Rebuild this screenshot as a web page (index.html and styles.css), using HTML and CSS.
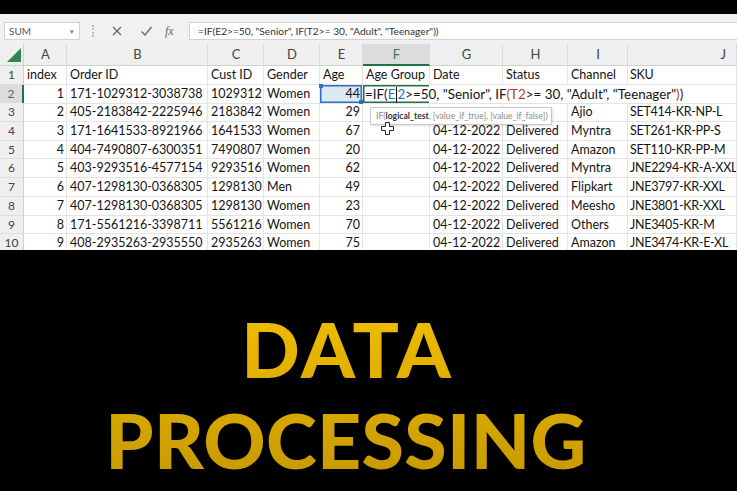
FILE: index.html
```html
<!DOCTYPE html>
<html>
<head>
<meta charset="utf-8">
<link rel="stylesheet" href="styles.css">
</head>
<body>
<div class="band"></div>
<div class="app">
  <div class="fbar">
    <div class="namebox"><span>SUM</span><span class="caret-down">▾</span></div>
    <div class="dots"></div>
    <div class="icons">
      <svg class="ico" width="12" height="12" viewBox="0 0 12 12"><path d="M2 2 L10 10 M10 2 L2 10" stroke="#666" stroke-width="1.3" fill="none"/></svg>
      <svg class="ico ok" width="13" height="12" viewBox="0 0 13 12"><path d="M1.5 6.5 L5 10 L11.5 2" stroke="#666" stroke-width="1.3" fill="none"/></svg>
      <span class="fx">fx</span>
    </div>
    <div class="finput">=IF(E2&gt;=50, "Senior", IF(T2&gt;= 30, "Adult", "Teenager"))</div>
  </div>
  <div class="sheet">
    <div class="row head">
      <div class="c rh corner"><svg width="14" height="14" viewBox="0 0 14 14"><path d="M14 0 L14 14 L0 14 Z" fill="#2d8a4e"/></svg></div>
      <div class="c ch">A</div><div class="c ch">B</div><div class="c ch">C</div><div class="c ch">D</div><div class="c ch">E</div><div class="c ch selcol">F</div><div class="c ch">G</div><div class="c ch">H</div><div class="c ch">I</div><div class="c ch jh">J</div>
    </div>
    <div class="row">
      <div class="c rh">1</div><div class="c">index</div><div class="c">Order ID</div><div class="c">Cust ID</div><div class="c">Gender</div><div class="c">Age</div><div class="c">Age Group</div><div class="c">Date</div><div class="c">Status</div><div class="c">Channel</div><div class="c sku">SKU</div>
    </div>
    <div class="row">
      <div class="c rh selrow">2</div><div class="c r">1</div><div class="c">171-1029312-3038738</div><div class="c r">1029312</div><div class="c">Women</div><div class="c r ref">44</div>
      <div class="c active nb">=IF(<span class="blue">E</span><span class="tcaret"></span><span class="blue">2</span>&gt;=50, "Senior", IF<span class="red">(T2</span>&gt;= 30, "Adult", "Teenager"<span class="red">)</span>)</div>
      <div class="c nb"></div><div class="c nb"></div><div class="c nb"></div><div class="c"></div>
    </div>
    <div class="row">
      <div class="c rh">3</div><div class="c r">2</div><div class="c">405-2183842-2225946</div><div class="c r">2183842</div><div class="c">Women</div><div class="c r">29</div><div class="c"></div><div class="c"></div><div class="c"></div><div class="c">Ajio</div><div class="c sku">SET414-KR-NP-L</div>
    </div>
    <div class="row">
      <div class="c rh">4</div><div class="c r">3</div><div class="c">171-1641533-8921966</div><div class="c r">1641533</div><div class="c">Women</div><div class="c r">67</div><div class="c"></div><div class="c r">04-12-2022</div><div class="c">Delivered</div><div class="c">Myntra</div><div class="c sku">SET261-KR-PP-S</div>
    </div>
    <div class="row">
      <div class="c rh">5</div><div class="c r">4</div><div class="c">404-7490807-6300351</div><div class="c r">7490807</div><div class="c">Women</div><div class="c r">20</div><div class="c"></div><div class="c r">04-12-2022</div><div class="c">Delivered</div><div class="c">Amazon</div><div class="c sku">SET110-KR-PP-M</div>
    </div>
    <div class="row">
      <div class="c rh">6</div><div class="c r">5</div><div class="c">403-9293516-4577154</div><div class="c r">9293516</div><div class="c">Women</div><div class="c r">62</div><div class="c"></div><div class="c r">04-12-2022</div><div class="c">Delivered</div><div class="c">Myntra</div><div class="c sku">JNE2294-KR-A-XXL</div>
    </div>
    <div class="row">
      <div class="c rh">7</div><div class="c r">6</div><div class="c">407-1298130-0368305</div><div class="c r">1298130</div><div class="c">Men</div><div class="c r">49</div><div class="c"></div><div class="c r">04-12-2022</div><div class="c">Delivered</div><div class="c">Flipkart</div><div class="c sku">JNE3797-KR-XXL</div>
    </div>
    <div class="row">
      <div class="c rh">8</div><div class="c r">7</div><div class="c">407-1298130-0368305</div><div class="c r">1298130</div><div class="c">Women</div><div class="c r">23</div><div class="c"></div><div class="c r">04-12-2022</div><div class="c">Delivered</div><div class="c">Meesho</div><div class="c sku">JNE3801-KR-XXL</div>
    </div>
    <div class="row">
      <div class="c rh">9</div><div class="c r">8</div><div class="c">171-5561216-3398711</div><div class="c r">5561216</div><div class="c">Women</div><div class="c r">70</div><div class="c"></div><div class="c r">04-12-2022</div><div class="c">Delivered</div><div class="c">Others</div><div class="c sku">JNE3405-KR-M</div>
    </div>
    <div class="row">
      <div class="c rh">10</div><div class="c r">9</div><div class="c">408-2935263-2935550</div><div class="c r">2935263</div><div class="c">Women</div><div class="c r">75</div><div class="c"></div><div class="c r">04-12-2022</div><div class="c">Delivered</div><div class="c">Amazon</div><div class="c sku">JNE3474-KR-E-XL</div>
    </div>
    <div class="tip">IF(<b>logical_test</b>, [value_if_true], [value_if_false])</div>
    <svg class="cursor" width="13" height="13" viewBox="0 0 13 13"><path d="M4.5 0.5 H8.5 V4.5 H12.5 V8.5 H8.5 V12.5 H4.5 V8.5 H0.5 V4.5 H4.5 Z" fill="#fff" stroke="#222" stroke-width="1"/></svg>
  </div>
</div>
<div class="title"><span class="l1">DATA</span><br><span class="l2">PROCESSING</span></div>
</body>
</html>
```

FILE: styles.css
```css
html, body {
  margin: 0;
  padding: 0;
}
body {
  width: 737px;
  height: 491px;
  overflow: hidden;
  background: #000;
  font-family: Lato, "Open Sans", sans-serif;
}
.band {
  height: 14px;
  background: #000;
}
.app {
  height: 236px;
  background: #fff;
  overflow: hidden;
}
.fbar {
  height: 30px;
  box-sizing: border-box;
  background: #f1f1f1;
  display: flex;
  align-items: stretch;
  padding: 8px 0 4px 4px;
}
.namebox {
  width: 76px;
  box-sizing: border-box;
  background: #fff;
  border: 1px solid #d2d2d2;
  display: flex;
  align-items: center;
  justify-content: space-between;
  padding: 0 5px 0 4px;
  font-size: 10px;
  color: #555;
}
.caret-down {
  font-size: 7px;
  color: #777;
}
.dots {
  width: 1px;
  margin: 3px 11px 3px 12px;
  border-left: 2px dotted #b8b8b8;
}
.icons {
  display: flex;
  align-items: center;
  width: 83px;
  padding-left: 5px;
  box-sizing: border-box;
  flex: none;
}
.ico {
  margin-right: 17px;
}
.ico.ok {
  margin-right: 12px;
}
.fx {
  font-family: "Liberation Serif", serif;
  font-style: italic;
  font-size: 12px;
  color: #666;
}
.finput {
  flex: 1;
  background: #fff;
  border: 1px solid #d2d2d2;
  border-right: none;
  box-sizing: border-box;
  padding-left: 8px;
  font-size: 10.2px;
  line-height: 16px;
  color: #333;
  white-space: nowrap;
}
.sheet {
  position: relative;
}
.row {
  display: grid;
  grid-template-columns: 24px 43px 141px 56px 56px 43px 67px 73px 65px 60px 109px;
  height: 18.7px;
}
.row.head {
  height: 22px;
  background: #efefef;
}
.c {
  box-sizing: border-box;
  border-right: 1px solid #e4e4e4;
  border-bottom: 1px solid #e4e4e4;
  padding: 0 2px 0 3px;
  white-space: nowrap;
  overflow: hidden;
  font-size: 12.5px;
  line-height: 18px;
  color: #141414;
}
.sku {
  letter-spacing: -0.3px;
  padding-left: 2px;
}
.r {
  text-align: right;
}
.rh {
  background: #efefef;
  color: #444;
  text-align: center;
  font-size: 12px;
  border-right: 1px solid #d0d0d0;
  border-bottom: 1px solid #dcdcdc;
  padding: 0;
}
.head .c {
  line-height: 21px;
  border-bottom: 1px solid #d0d0d0;
}
.ch {
  background: #efefef;
  color: #444;
  text-align: center;
  font-size: 13px;
  border-right: 1px solid #dadada;
}
.jh {
  text-align: right;
  padding-right: 10px;
}
.corner {
  display: flex;
  align-items: flex-end;
  justify-content: flex-end;
  padding: 0 2px 3px 0;
}
.corner svg {
  display: block;
}
.selcol {
  background: #dcdcdc;
  color: #3b7a52;
  border-bottom: 2px solid #217346 !important;
}
.selrow {
  background: #dcdcdc;
  color: #3b7a52;
  border-right: 2px solid #217346;
}
.ref {
  background: #dde8f5;
  box-shadow: inset 0 0 0 1.5px #2f6fbf;
  position: relative;
  overflow: visible;
}
.ref::before, .ref::after {
  content: "";
  position: absolute;
  width: 4px;
  height: 4px;
  background: #2f6fbf;
}
.ref::before {
  left: -1px;
  top: -1px;
}
.ref::after {
  right: -1px;
  bottom: -1px;
}
.active {
  overflow: visible;
  box-shadow: inset 1.5px 1.5px 0 0 #217346, inset 0 -1.5px 0 0 #217346;
  padding-left: 2px;
  font-size: 13.4px;
}
.nb {
  border-right-color: transparent;
}
.blue {
  color: #2f6fbf;
}
.red {
  color: #c0392b;
}
.tcaret {
  display: inline-block;
  width: 1px;
  height: 16px;
  background: #111;
  vertical-align: middle;
  margin: 0 0.5px;
}
.tip {
  position: absolute;
  left: 370px;
  top: 63px;
  width: 182px;
  height: 18px;
  box-sizing: border-box;
  background: #fff;
  border: 1px solid #c8c8c8;
  font-size: 8.6px;
  line-height: 16px;
  color: #8a8a8a;
  padding-left: 5px;
  white-space: nowrap;
  box-shadow: 1px 1px 2px rgba(0,0,0,0.12);
}
.tip b {
  color: #333;
}
.cursor {
  position: absolute;
  left: 381px;
  top: 78px;
}
.title {
  padding: 53px 45px 0 0;
  text-align: center;
  font-family: Lato, sans-serif;
  font-weight: 900;
  font-size: 77px;
  line-height: 91px;
  background: linear-gradient(180deg, #f9c900 0%, #e6b400 45%, #c59800 100%);
  background-clip: text;
  -webkit-background-clip: text;
  color: transparent;
  height: 182px;
  box-sizing: content-box;
}
.l1 {
  letter-spacing: 3px;
  margin-right: -3px;
}
.l2 {
  letter-spacing: 0.3px;
}
```
